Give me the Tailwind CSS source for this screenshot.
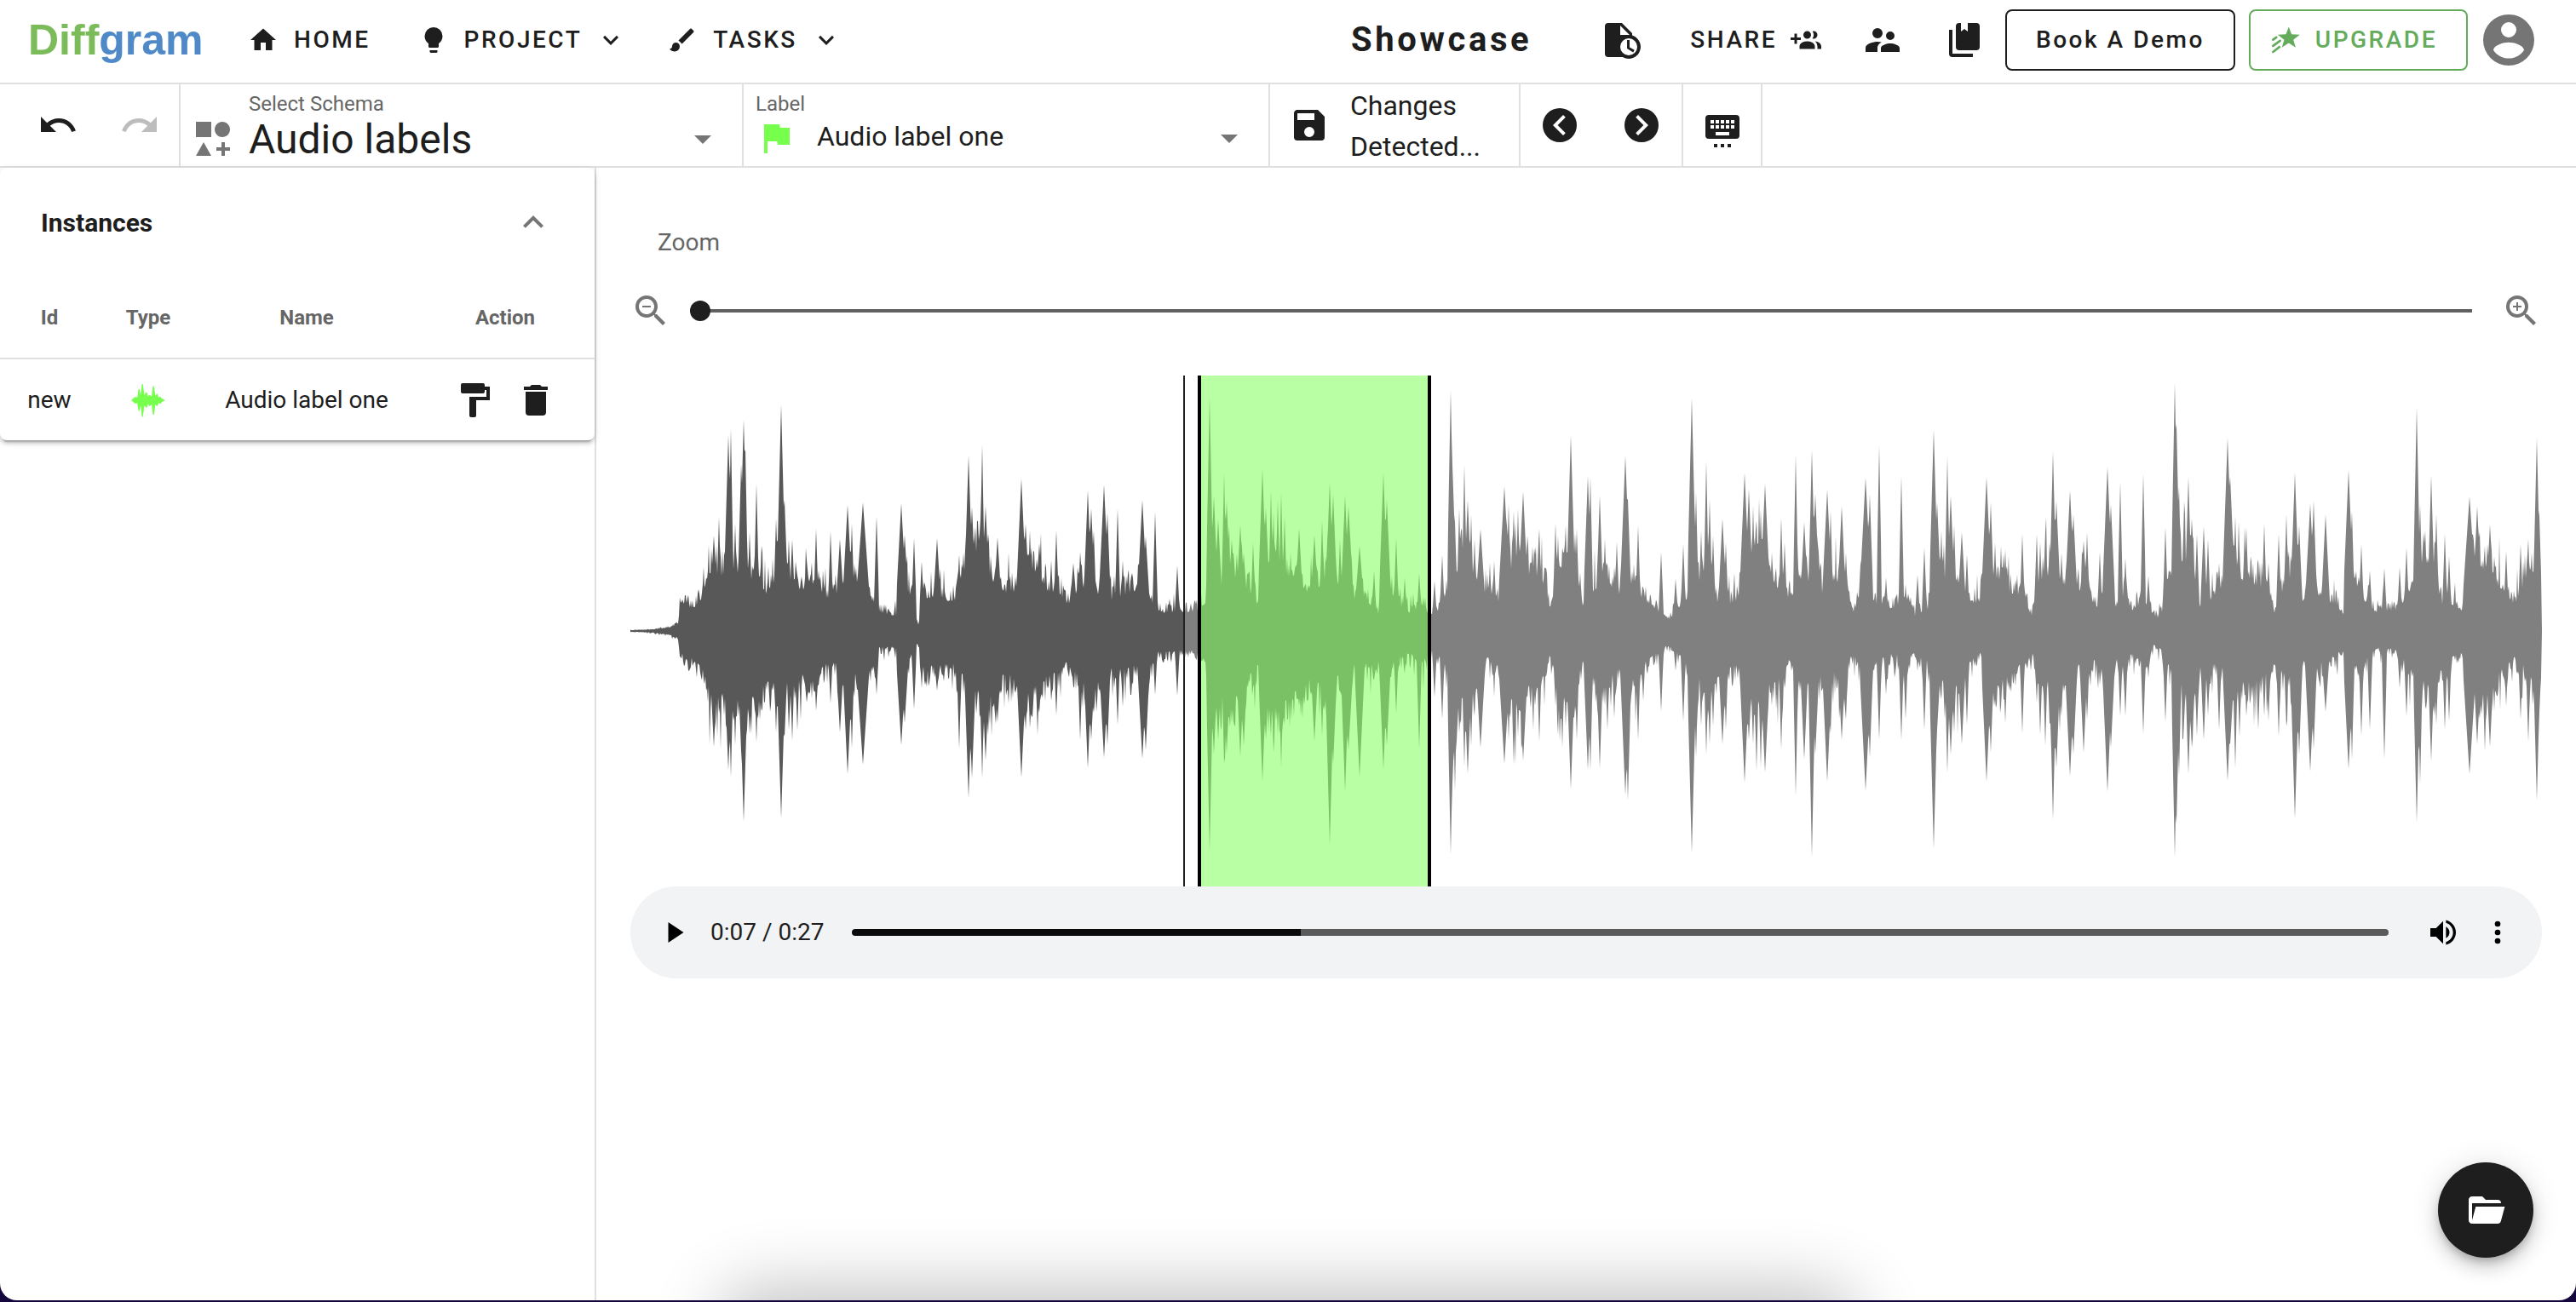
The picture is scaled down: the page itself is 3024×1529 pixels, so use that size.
<!DOCTYPE html>
<html lang="en">
<head>
<meta charset="utf-8">
<title>Diffgram</title>
<script src="https://cdn.jsdelivr.net/npm/@tailwindcss/browser@4"></script>
</head>
<body class="h-screen overflow-hidden bg-[#14053c] pb-[2px] font-[Roboto,sans-serif] text-[#1e1e1e]">
<svg class="hidden">
  <symbol id="home" viewBox="0 0 24 24"><path d="M10,20V14H14V20H19V12H22L12,3L2,12H5V20H10Z"/></symbol>
  <symbol id="bulb" viewBox="0 0 24 24"><path d="M12,2A7,7 0 0,0 5,9C5,11.38 6.19,13.47 8,14.74V17A1,1 0 0,0 9,18H15A1,1 0 0,0 16,17V14.74C17.81,13.47 19,11.38 19,9A7,7 0 0,0 12,2M9,21A1,1 0 0,0 10,22H14A1,1 0 0,0 15,21V20H9V21Z"/></symbol>
  <symbol id="chevron-down" viewBox="0 0 24 24"><path d="M7.41,8.58L12,13.17L16.59,8.58L18,10L12,16L6,10L7.41,8.58Z"/></symbol>
  <symbol id="chevron-up" viewBox="0 0 24 24"><path d="M7.41,15.41L12,10.83L16.59,15.41L18,14L12,8L6,14L7.41,15.41Z"/></symbol>
  <symbol id="brush" viewBox="0 0 24 24"><path d="M20.71,4.63L19.37,3.29C19,2.9 18.35,2.9 17.96,3.29L9,12.25L11.75,15L20.71,6.04C21.1,5.65 21.1,5 20.71,4.63M7,14A3,3 0 0,0 4,17C4,18.31 2.84,19 2,19C2.92,20.22 4.5,21 6,21A4,4 0 0,0 10,17A3,3 0 0,0 7,14Z"/></symbol>
  <symbol id="undo" viewBox="0 0 24 24"><path d="M12.5,8C9.85,8 7.45,9 5.6,10.6L2,7V16H11L7.38,12.38C8.77,11.22 10.54,10.5 12.5,10.5C16.04,10.5 19.05,12.81 20.1,16L22.47,15.22C21.08,11.03 17.15,8 12.5,8Z"/></symbol>
  <symbol id="redo" viewBox="0 0 24 24"><path d="M18.4,10.6C16.55,9 14.15,8 11.5,8C6.85,8 2.92,11.03 1.54,15.22L3.9,16C4.95,12.81 7.95,10.5 11.5,10.5C13.45,10.5 15.23,11.22 16.62,12.38L13,16H22V7L18.4,10.6Z"/></symbol>
  <symbol id="shapes" viewBox="0 0 24 24"><path d="M2,2H11V11H2V2M17.5,2C20,2 22,4 22,6.5C22,9 20,11 17.5,11C15,11 13,9 13,6.5C13,4 15,2 17.5,2M6.5,14L11,22H2L6.5,14M19,17H22V19H19V22H17V19H14V17H17V14H19V17Z"/></symbol>
  <symbol id="flag" viewBox="0 0 24 24"><path d="M14.4,6L14,4H5V21H7V14H12.6L13,16H20V6H14.4Z"/></symbol>
  <symbol id="menu-down" viewBox="0 0 24 24"><path d="M7,10L12,15L17,10H7Z"/></symbol>
  <symbol id="save" viewBox="0 0 24 24"><path d="M15,9H5V5H15M12,19A3,3 0 0,1 9,16A3,3 0 0,1 12,13A3,3 0 0,1 15,16A3,3 0 0,1 12,19M17,3H5C3.89,3 3,3.9 3,5V19A2,2 0 0,0 5,21H19A2,2 0 0,0 21,19V7L17,3Z"/></symbol>
  <symbol id="prev" viewBox="0 0 24 24"><path fill-rule="evenodd" d="M22,12A10,10 0 0,1 12,22A10,10 0 0,1 2,12A10,10 0 0,1 12,2A10,10 0 0,1 22,12M15.4,16.6L10.8,12L15.4,7.4L14,6L8,12L14,18L15.4,16.6Z"/></symbol>
  <symbol id="next" viewBox="0 0 24 24"><path fill-rule="evenodd" d="M22,12A10,10 0 0,1 12,22A10,10 0 0,1 2,12A10,10 0 0,1 12,2A10,10 0 0,1 22,12M8.6,16.6L10,18L16,12L10,6L8.6,7.4L13.2,12L8.6,16.6Z"/></symbol>
  <symbol id="keyboard" viewBox="0 0 24 24"><path fill-rule="evenodd" d="M4,2H20A2,2 0 0,1 22,4V14A2,2 0 0,1 20,16H4A2,2 0 0,1 2,14V4A2,2 0 0,1 4,2M5,5V7H7V5M8,5V7H10V5M11,5V7H13V5M14,5V7H16V5M17,5V7H19V5M5,8V10H7V8M8,8V10H10V8M11,8V10H13V8M14,8V10H16V8M17,8V10H19V8M8,12V14H16V12M7,19H9V21H7M11,19H13V21H11M15,19H17V21H15"/></symbol>
  <symbol id="file-clock" viewBox="0 0 24 24"><path fill-rule="evenodd" d="M4,2A2,2 0 0,0 2,4V20A2,2 0 0,0 4,22H12.4A7,7 0 0,0 16,23A7,7 0 0,0 18,9.3V8L12,2M11,3.5L16.5,9H11M16,11A5,5 0 0,1 21,16A5,5 0 0,1 16,21A5,5 0 0,1 11,16A5,5 0 0,1 16,11M15,12V17L18.6,19.2L19.4,17.9L16.5,16.2V12Z"/></symbol>
  <symbol id="group-plus" viewBox="0 0 24 24"><path d="M19 17V19H7V17S7 13 13 13 19 17 19 17M16 8A3 3 0 1 0 13 11A3 3 0 0 0 16 8M19.2 13.06A5.6 5.6 0 0 1 21 17V19H24V17S24 13.55 19.2 13.06M18 5A2.91 2.91 0 0 0 17.11 5.14A5 5 0 0 1 17.11 10.86A2.91 2.91 0 0 0 18 11A3 3 0 0 0 18 5M8 10H5V7H3V10H0V12H3V15H5V12H8Z"/></symbol>
  <symbol id="people" viewBox="0 0 24 24"><path d="M16.5,12A2.5,2.5 0 0,0 19,9.5A2.5,2.5 0 0,0 16.5,7A2.5,2.5 0 0,0 14,9.5A2.5,2.5 0 0,0 16.5,12M9,11A3,3 0 0,0 12,8A3,3 0 0,0 9,5A3,3 0 0,0 6,8A3,3 0 0,0 9,11M16.5,14C14.67,14 11,14.92 11,16.75V19H22V16.75C22,14.92 18.33,14 16.5,14M9,13C6.67,13 2,14.17 2,16.5V19H9V16.75C9,15.9 9.33,14.41 11.37,13.28C10.5,13.1 9.66,13 9,13Z"/></symbol>
  <symbol id="books" viewBox="0 0 24 24"><path d="M19,18H9A2,2 0 0,1 7,16V4A2,2 0 0,1 9,2H10V7L12,5.5L14,7V2H19A2,2 0 0,1 21,4V16A2,2 0 0,1 19,18M17,20V22H5A2,2 0 0,1 3,20V6H5V20H17Z"/></symbol>
  <symbol id="star" viewBox="0 0 24 24"><path d="M15.2,1.6L17.4,7.5L23.8,7.8L18.8,11.8L20.6,17.9L15.2,14.4L9.8,17.9L11.6,11.8L6.6,7.8L13,7.5Z"/><path fill="none" stroke="currentColor" stroke-width="1.8" stroke-linecap="round" d="M2.9,11.8L5.5,9.9M2.9,16.6L8.4,12.6M2.9,21.3L7.9,17.4"/></symbol>
  <symbol id="account" viewBox="0 0 24 24"><path d="M12,19.2C9.5,19.2 7.29,17.92 6,16C6.03,14 10,12.9 12,12.9C14,12.9 17.97,14 18,16C16.71,17.92 14.5,19.2 12,19.2M12,5A3,3 0 0,1 15,8A3,3 0 0,1 12,11A3,3 0 0,1 9,8A3,3 0 0,1 12,5M12,2A10,10 0 0,0 2,12A10,10 0 0,0 12,22A10,10 0 0,0 22,12C22,6.47 17.5,2 12,2Z"/></symbol>
  <symbol id="wave" viewBox="0 0 24 24"><path d="M2,12L4.3,10L5.6,10.4L6.3,5.5H6.9L7.6,9L8.3,2.5H8.9L9.7,9L10.6,7.4H11.2L11.9,9.8L12.6,9H13.1L14,9.8L14.8,3.7H15.4L16.2,9.6L16.9,8.2H17.4L18.2,10.5L19,9.8L20,11L22,12L20,13L19,14.4L18.2,13.5L17.4,15.4H16.9L16.2,14.4L15.4,20.5H14.8L14,14.4L13.1,15.4H12.6L11.9,14.2L11.2,16.2H10.6L9.7,15L8.9,21.7H8.3L7.6,15L6.9,18.3H6.3L5.6,13.8L4.3,14Z"/></symbol>
  <symbol id="paint" viewBox="0 0 24 24"><path d="M18,4V3A1,1 0 0,0 17,2H5A1,1 0 0,0 4,3V7A1,1 0 0,0 5,8H17A1,1 0 0,0 18,7V6H19V10H9V21A1,1 0 0,0 10,22H12A1,1 0 0,0 13,21V12H21V4H18Z"/></symbol>
  <symbol id="trash" viewBox="0 0 24 24"><path d="M19,4H15.5L14.5,3H9.5L8.5,4H5V6H19M6,19A2,2 0 0,0 8,21H16A2,2 0 0,0 18,19V7H6V19Z"/></symbol>
  <symbol id="zoom-out" viewBox="0 0 24 24"><path d="M15.5,14H14.71L14.43,13.73C15.41,12.59 16,11.11 16,9.5A6.5,6.5 0 0,0 9.5,3A6.5,6.5 0 0,0 3,9.5A6.5,6.5 0 0,0 9.5,16C11.11,16 12.59,15.41 13.73,14.43L14,14.71V15.5L19,20.5L20.5,19L15.5,14M9.5,14C7,14 5,12 5,9.5C5,7 7,5 9.5,5C12,5 14,7 14,9.5C14,12 12,14 9.5,14M7,9H12V10H7V9Z"/></symbol>
  <symbol id="zoom-in" viewBox="0 0 24 24"><path d="M15.5,14H14.71L14.43,13.73C15.41,12.59 16,11.11 16,9.5A6.5,6.5 0 0,0 9.5,3A6.5,6.5 0 0,0 3,9.5A6.5,6.5 0 0,0 9.5,16C11.11,16 12.59,15.41 13.73,14.43L14,14.71V15.5L19,20.5L20.5,19L15.5,14M9.5,14C7,14 5,12 5,9.5C5,7 7,5 9.5,5C12,5 14,7 14,9.5C14,12 12,14 9.5,14M12,10H10V12H9V10H7V9H9V7H10V9H12V10Z"/></symbol>
  <symbol id="folder" viewBox="0 0 24 24"><path d="M19,20H4C2.89,20 2,19.1 2,18V6C2,4.89 2.89,4 4,4H10L12,6H19A2,2 0 0,1 21,8H21L4,8V18L6.14,10H23.21L20.93,18.5C20.7,19.37 19.92,20 19,20Z"/></symbol>
  <symbol id="volume" viewBox="0 0 24 24"><path d="M14,3.23V5.29C16.89,6.15 19,8.83 19,12C19,15.17 16.89,17.84 14,18.7V20.77C18,19.86 21,16.28 21,12C21,7.72 18,4.14 14,3.23M16.5,12C16.5,10.23 15.5,8.71 14,7.97V16C15.5,15.29 16.5,13.76 16.5,12M3,9V15H7L12,20V4L7,9H3Z"/></symbol>
  <symbol id="dots" viewBox="0 0 24 24"><path d="M12,16A2,2 0 0,1 14,18A2,2 0 0,1 12,20A2,2 0 0,1 10,18A2,2 0 0,1 12,16M12,10A2,2 0 0,1 14,12A2,2 0 0,1 12,14A2,2 0 0,1 10,12A2,2 0 0,1 12,10M12,4A2,2 0 0,1 14,6A2,2 0 0,1 12,8A2,2 0 0,1 10,6A2,2 0 0,1 12,4Z"/></symbol>
  <symbol id="play" viewBox="0 0 24 24"><path d="M7,4V20L19,12Z"/></symbol>
</svg>

<div class="relative flex h-full flex-col overflow-hidden rounded-b-[20px] bg-white">
  <header class="flex h-[99px] shrink-0 items-center border-b-2 border-[#e0e0e0] pr-[43px] pb-1 pl-[33px] text-[28px] font-medium tracking-[0.09em]">
    <a href="#" class="w-[258px] font-['Liberation_Sans',sans-serif] text-[50px] leading-[64px] font-bold tracking-normal text-[#7bbb59]">Diff<span class="text-[#5089c7]">gram</span></a>
    <nav class="flex items-center">
      <a href="#" class="flex items-center gap-[18px]"><svg class="size-9 fill-current"><use href="#home"/></svg>HOME</a>
      <button class="ml-14 flex items-center gap-4"><svg class="mr-0.5 size-9 fill-current"><use href="#bulb"/></svg>PROJECT<svg class="size-9 fill-current"><use href="#chevron-down"/></svg></button>
      <button class="ml-12 flex items-center gap-4"><svg class="mr-0.5 size-9 fill-current"><use href="#brush"/></svg>TASKS<svg class="size-9 fill-current"><use href="#chevron-down"/></svg></button>
    </nav>
    <h1 class="ml-auto text-[40px] font-bold tracking-[0.09em]">Showcase</h1>
    <button aria-label="History" class="ml-[82px]"><svg class="size-12 fill-current"><use href="#file-clock"/></svg></button>
    <button class="ml-14 flex items-center gap-4">SHARE<svg class="size-9 fill-current"><use href="#group-plus"/></svg></button>
    <button aria-label="Members" class="ml-12"><svg class="size-12 fill-current"><use href="#people"/></svg></button>
    <button aria-label="Guides" class="ml-12"><svg class="size-12 fill-current"><use href="#books"/></svg></button>
    <button class="ml-6 h-[72px] rounded-lg border-2 border-current px-[34px]">Book A Demo</button>
    <button class="ml-4 flex h-[72px] items-center gap-[18px] rounded-lg border-2 border-current pr-[34px] pl-[22px] text-[#64ac5c]"><svg class="size-9 fill-current"><use href="#star"/></svg>UPGRADE</button>
    <button aria-label="Account" class="ml-3"><svg class="size-[72px] fill-[#757575]"><use href="#account"/></svg></button>
  </header>

  <div class="flex h-[98px] shrink-0 border-b-2 border-[#e0e0e0]">
    <div class="flex w-[212px] items-center gap-12 border-r-2 border-[#e0e0e0] pl-11">
      <button aria-label="Undo"><svg class="size-12 fill-current"><use href="#undo"/></svg></button>
      <button aria-label="Redo" disabled><svg class="size-12 fill-[#bdbdbd]"><use href="#redo"/></svg></button>
    </div>
    <div class="flex w-[661px] border-r-2 border-[#e0e0e0] pr-[22px] pl-[14px]">
      <svg class="mt-10 size-12 fill-[#757575]"><use href="#shapes"/></svg>
      <div class="ml-[18px] flex flex-1 flex-col pt-[7px]">
        <label for="schema" class="text-2xl leading-8 text-[#666]">Select Schema</label>
        <select id="schema" class="mt-0.5 h-12 appearance-none text-5xl leading-[48px]"><option>Audio labels</option></select>
      </div>
      <svg class="mt-10 size-12 fill-[#757575]"><use href="#menu-down"/></svg>
    </div>
    <div class="flex w-[618px] flex-col border-r-2 border-[#e0e0e0] pt-[7px] pr-[22px] pl-[14px]">
      <label for="label" class="text-2xl leading-8 text-[#666]">Label</label>
      <div class="flex h-12 items-center">
        <svg class="size-12 fill-[#76ff4d]"><use href="#flag"/></svg>
        <select id="label" class="ml-6 h-full flex-1 appearance-none pb-1 text-[32px] leading-[40px]"><option>Audio label one</option></select>
        <svg class="size-12 fill-[#757575]"><use href="#menu-down"/></svg>
      </div>
    </div>
    <div class="flex w-[294px] items-center gap-6 border-r-2 border-[#e0e0e0] pl-[22px]">
      <button aria-label="Save"><svg class="size-12 fill-current"><use href="#save"/></svg></button>
      <p class="w-40 pt-0.5 text-[32px] leading-[48px]">Changes Detected...</p>
    </div>
    <div class="flex w-[191px] items-center gap-12 border-r-2 border-[#e0e0e0] pl-[22px]">
      <button aria-label="Previous file"><svg class="size-12 fill-current"><use href="#prev"/></svg></button>
      <button aria-label="Next file"><svg class="size-12 fill-current"><use href="#next"/></svg></button>
    </div>
    <div class="flex w-[93px] items-center justify-center border-r-2 border-[#e0e0e0] pt-4">
      <button aria-label="Keyboard shortcuts"><svg class="size-12 fill-current"><use href="#keyboard"/></svg></button>
    </div>
  </div>

  <main class="flex min-h-0 flex-1">
    <aside class="w-[700px] shrink-0 border-r-2 border-[#e0e0e0]">
      <section class="rounded-lg bg-white shadow-[0_6px_2px_-4px_rgba(0,0,0,0.2),0_4px_4px_0_rgba(0,0,0,0.14),0_2px_10px_0_rgba(0,0,0,0.12)]">
        <button class="flex h-32 w-full items-center justify-between px-12 text-[30px] font-bold">Instances<svg class="size-12 fill-[#757575]"><use href="#chevron-up"/></svg></button>
        <table class="w-full table-fixed text-center text-[28px]">
          <colgroup><col class="w-[116px]"><col class="w-[116px]"><col class="w-[256px]"><col></colgroup>
          <thead><tr class="h-24 border-b-2 border-[#e0e0e0] text-2xl text-[#666]"><th>Id</th><th>Type</th><th>Name</th><th>Action</th></tr></thead>
          <tbody><tr class="h-24">
            <td>new</td>
            <td><svg class="mx-auto size-12 fill-[#76ff4d]"><use href="#wave"/></svg></td>
            <td>Audio label one</td>
            <td><div class="flex justify-center gap-6"><button aria-label="Change label"><svg class="size-12 fill-current"><use href="#paint"/></svg></button><button aria-label="Delete"><svg class="size-12 fill-current"><use href="#trash"/></svg></button></div></td>
          </tr></tbody>
        </table>
      </section>
    </aside>

    <section class="min-w-0 flex-1 px-10">
      <label for="zoom" class="mt-[68px] ml-8 block text-[28px] leading-10 text-[#666]">Zoom</label>
      <div class="mt-9 flex h-12 items-center">
        <svg class="size-12 shrink-0 fill-[#757575]"><use href="#zoom-out"/></svg>
        <input id="zoom" type="range" min="0" max="100" value="0" class="mr-[34px] ml-[22px] h-6 min-w-0 flex-1 appearance-none bg-[linear-gradient(#616161,#616161)] bg-[length:100%_4px] bg-center bg-no-repeat [&::-webkit-slider-thumb]:size-6 [&::-webkit-slider-thumb]:appearance-none [&::-webkit-slider-thumb]:rounded-full [&::-webkit-slider-thumb]:bg-[#1e1e1e]">
        <svg class="size-12 shrink-0 fill-[#757575]"><use href="#zoom-in"/></svg>
      </div>

      <div class="relative mt-[52px] h-[600px]">
        <svg class="block size-full" viewBox="0 0 2244 600" preserveAspectRatio="none">
          <defs><linearGradient id="played" gradientUnits="userSpaceOnUse" x1="0" x2="2244" y1="0" y2="0"><stop offset="0.289" stop-color="#585858"/><stop offset="0.289" stop-color="#808080"/></linearGradient></defs>
          <path id="waveform" fill="url(#played)"/>
        </svg>
        <div class="absolute inset-y-0 left-[28.9%] w-[2px] bg-[#222]"></div>
        <div class="absolute inset-y-0 left-[29.68%] w-[12.21%] border-x-4 border-black bg-[#73ff4a]/50 bg-clip-padding"></div>
      </div>

      <div class="flex h-[108px] items-center rounded-full bg-[#f1f3f4] pr-8 pl-[34px]">
        <button aria-label="Play"><svg class="size-9"><use href="#play"/></svg></button>
        <span class="ml-6 w-[166px] text-[28px]">0:07 / 0:27</span>
        <input aria-label="Position" type="range" min="0" max="27" value="7" class="h-2 min-w-0 flex-1 appearance-none rounded-full bg-[linear-gradient(90deg,#0a0a0a_29.2%,#5a5a5a_29.2%)] [&::-webkit-slider-thumb]:size-0 [&::-webkit-slider-thumb]:appearance-none">
        <button aria-label="Mute" class="ml-11"><svg class="size-10"><use href="#volume"/></svg></button>
        <button aria-label="More options" class="ml-6"><svg class="size-10"><use href="#dots"/></svg></button>
      </div>
    </section>
  </main>

  <div class="absolute -bottom-[60px] left-[29%] h-10 w-[42%] rounded-full shadow-[0_0_80px_36px_rgba(0,0,0,0.24)]"></div>
  <button aria-label="Open files" class="absolute right-[50px] bottom-[50px] flex size-28 items-center justify-center rounded-full bg-[#1e1e1e] shadow-[0_6px_10px_-2px_rgba(0,0,0,0.2),0_12px_20px_0_rgba(0,0,0,0.14),0_2px_36px_0_rgba(0,0,0,0.12)]"><svg class="size-12 fill-white"><use href="#folder"/></svg></button>
</div>

<script>
// Loudness envelope of the clip: [position, level above the axis, level below it]
const body = [[0,1,1],[29,2,2],[47,5,5],[56,9,9],[59,40,30],[74,30,38],[84,45,50],[92,80,75],[105,75,85],[125,80,95],[145,70,90],[160,50,70],[175,80,70],[190,70,70],[200,55,60],[215,60,60],[230,45,45],[250,50,42],[262,60,60],[280,50,50],[292,25,22],[312,20,20],[318,60,60],[328,45,35],[338,9,14],[345,45,50],[365,45,45],[380,38,45],[390,75,60],[405,105,80],[424,75,90],[430,50,60],[455,55,60],[472,85,80],[490,55,60],[505,50,55],[513,35,40],[530,60,65],[548,55,70],[552,35,50],[565,40,50],[585,52,45],[600,55,50],[612,40,45],[620,25,28],[652,26,26],[668,28,28],[676,40,40],[684,60,70],[697,65,95],[708,70,85],[722,60,50],[732,45,60],[738,30,40],[745,90,100],[758,75,95],[772,75,90],[790,50,75],[800,50,60],[815,70,70],[827,65,65],[836,45,55],[848,50,50],[853,30,40],[862,45,45],[878,22,40],[890,60,50],[900,35,35],[915,25,30],[930,35,40],[942,15,25],[955,35,40],[966,80,75],[985,75,90],[996,40,40],[1008,55,35],[1020,40,50],[1035,90,95],[1060,75,70],[1075,55,50],[1079,30,30],[1090,75,75],[1110,80,75],[1118,35,40],[1135,60,70],[1148,60,60],[1160,50,50],[1175,65,70],[1188,45,45],[1205,28,30],[1219,15,18],[1232,25,30],[1245,50,50],[1268,80,85],[1278,30,55],[1300,42,45],[1312,90,80],[1330,90,80],[1345,60,65],[1360,45,40],[1375,60,60],[1395,80,70],[1403,25,40],[1415,70,60],[1427,50,50],[1435,25,30],[1450,50,50],[1465,35,40],[1480,30,30],[1500,40,35],[1508,20,30],[1523,30,40],[1540,60,60],[1558,70,75],[1565,35,45],[1585,40,30],[1600,70,75],[1620,50,60],[1636,45,40],[1645,20,28],[1660,80,70],[1678,60,65],[1688,60,60],[1700,55,45],[1712,55,60],[1720,30,35],[1733,50,50],[1745,30,35],[1755,50,50],[1762,28,30],[1776,40,40],[1791,15,15],[1800,30,30],[1815,100,70],[1835,85,75],[1843,30,50],[1858,45,45],[1868,60,45],[1880,80,75],[1905,60,65],[1920,60,55],[1930,25,45],[1945,70,60],[1955,70,70],[1963,40,40],[1980,50,50],[1990,40,35],[2000,38,35],[2012,22,22],[2022,60,50],[2040,35,35],[2050,25,22],[2075,30,25],[2085,45,45],[2100,80,65],[2118,70,80],[2128,30,40],[2140,35,35],[2153,25,25],[2165,100,80],[2185,70,70],[2195,60,55],[2212,35,35],[2225,70,50],[2241,90,85],[2244,10,10]];
// Transients: [position, peak above, peak below, half width]
const peaks = [[98,112,136,5],[104,134,95],[115,230,163,5],[118,238,172],[123,126,134],[130,196,141,4],[133,248,224,5],[135,213,150],[140,116,121],[148,173,131],[154,100,90],[171,132,119],[177,266,220,5],[181,154,124,4],[186,108,116],[190,103,129],[196,65,117],[207,83,84,6],[218,120,94],[235,117,85],[246,108,119,5],[255,148,168,6],[260,126,138],[265,74,60],[273,151,157,8],[289,135,75],[318,150,134,6],[322,113,108,5],[333,109,92],[342,82,67],[360,109,70,5],[386,90,138],[397,206,196,5],[401,146,173,5],[413,219,173],[417,147,152,5],[420,114,122],[431,110,107,5],[444,79,85],[459,179,172,6],[464,126,116,5],[469,118,114],[480,103,96,5],[494,83,82],[500,118,99],[520,80,64,5],[528,93,128],[537,165,161,5],[541,144,128,5],[544,118,96],[556,172,149,6],[560,139,134,4],[572,144,110],[578,83,89],[587,58,75],[601,154,150,6],[605,111,140,5],[616,140,75],[642,77,76],
[680,276,260,4],[685,159,145,5],[690,132,128,5],[697,186,155],[700,153,144,5],[706,108,108,5],[716,125,148,5],[720,92,135,5],[731,104,67],[742,191,177,5],[746,145,128,5],[752,166,124],[755,140,143],[760,155,124],[764,163,161],[768,135,108],[785,121,88,5],[803,113,130,5],[812,130,124],[821,175,252,5],[825,161,157,5],[833,108,71],[839,160,189,5],[843,147,140,6],[856,100,172,6],[873,71,50],[884,186,163,5],[888,155,135,5],[899,110,97],[909,63,50],[926,68,139],[944,59,78],[953,90,104],[963,283,263,4],[965,195,180,5],[968,128,188],[973,144,120],[979,195,159],[983,154,168,5],[987,137,135],[991,108,100],[998,120,137,6],[1014,82,67],[1026,170,156,7],[1031,149,128],[1037,141,157],[1042,144,124],[1048,164,152,6],[1062,90,88,5],[1067,120,130],[1073,75,71],[1086,127,88],[1089,112,122],[1094,98,137],[1098,124,112],[1104,230,186,5],[1111,120,128],[1124,182,163,5],[1127,181,164],[1138,159,161,4],[1144,108,88],[1147,80,116],[1155,75,102],[1158,105,60],[1168,206,193,6],[1171,155,199,4],[1183,124,128],[1189,47,82],[1210,93,95],[1227,62,47],[1236,102,106],[1246,274,261,5],[1251,163,149],[1257,118,112],[1263,200,145],[1267,155,133],[1271,112,112],[1282,132,133,5],[1286,104,116],[1308,186,178,6],[1313,167,128,5],[1318,147,133],[1322,130,164],[1327,143,160],[1332,173,166,6],[1340,92,88],[1351,133,139],[1355,104,67],[1368,207,194],[1378,128,151,5],[1387,213,266,4],[1391,161,145,5],
[1405,166,177,6],[1409,141,120],[1422,147,128,5],[1427,92,104],[1444,78,55],[1450,180,188,7],[1455,161,149,4],[1466,218,128],[1474,63,75],[1492,182,128],[1497,55,104],[1511,66,47],[1519,98,116],[1530,237,256,5],[1534,151,116,5],[1539,118,80],[1546,205,167],[1550,159,145,5],[1554,124,120],[1563,116,133,5],[1569,90,110],[1592,181,177,6],[1597,151,143,4],[1602,104,80],[1609,100,78],[1614,96,108],[1626,60,65],[1634,114,120],[1651,114,84],[1655,104,122],[1661,116,135],[1666,104,108],[1670,211,222,4],[1674,153,161,5],[1680,92,100],[1690,165,171,6],[1694,137,145,5],[1706,106,143,5],[1710,116,104],[1725,93,63],[1734,193,189,6],[1738,149,137,5],[1749,175,100],[1755,86,100],[1776,185,121],[1782,65,55],[1802,122,107],[1813,292,266,4],[1815,243,226,4],[1818,169,169],[1824,131,104],[1829,181,168,4],[1833,132,137,5],[1839,114,124],[1847,123,128,4],[1852,108,100],[1865,80,116],[1875,227,176,6],[1878,181,133,6],[1884,135,161],[1889,96,124],[1897,122,100],[1911,84,116],[1918,126,100],[1923,80,106],[1935,114,124],[1944,137,112],[1954,186,221,5],[1959,124,145,4],[1972,149,165,6],[1976,153,139,4],[1990,137,95,5],[2017,189,162,6],[2021,141,151],[2032,102,123],[2042,71,116],[2059,74,150],[2077,75,67],[2085,98,100],[2097,263,225,4],[2101,149,180],[2107,118,88],[2114,183,153,4],[2120,137,110],[2130,114,116],[2135,88,106],[2159,158,168,8],[2168,147,133,5],[2177,100,141],[2183,125,136,5],[2189,75,70],[2202,94,88],[2219,102,104],[2228,108,130],[2238,227,199,4],[2241,135,96]];
let seed = 7;
const rand = () => (seed = (seed * 16807) % 2147483647) / 2147483647;
const level = (x, side) => {
  let i = 1;
  while (i < body.length - 1 && body[i][0] < x) i++;
  const a = body[i - 1], b = body[i];
  const t = (x - a[0]) / (b[0] - a[0]);
  const flare = rand() < 0.15 ? 1.35 : 1;
  let v = (a[side] + (b[side] - a[side]) * t) * (0.85 + 0.5 * rand() ** 2) * flare;
  for (const p of peaks) {
    const w = p[3] || 3, d = Math.abs(x - p[0]) / w;
    if (d < 1) v = Math.max(v, p[side] * (1 - d * 0.75));
  }
  return v;
};
let upper = '', lower = '';
for (let x = 0; x <= 2243; x++) {
  upper += `L${x} ${(300 - level(x, 1)).toFixed(1)}`;
  lower = `L${x} ${(300 + level(x, 2)).toFixed(1)}` + lower;
}
document.getElementById('waveform').setAttribute('d', 'M0 300' + upper + 'L2244 300' + lower + 'Z');
</script>
</body>
</html>
